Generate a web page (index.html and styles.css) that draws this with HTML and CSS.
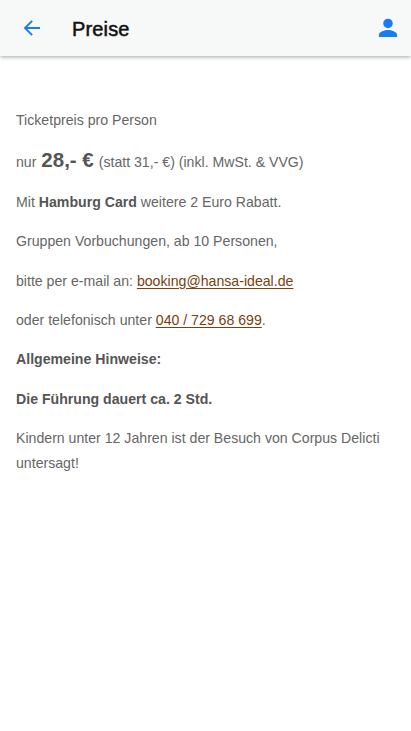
FILE: index.html
```html
<!DOCTYPE html>
<html lang="de">
<head>
  <meta charset="UTF-8" />
  <meta name="viewport" content="width=device-width, initial-scale=1">
  <title>Preise</title>
  <link rel="stylesheet" href="styles.css">
</head>
<body>
  <header class="toolbar">
    <a href="#" class="icon-btn" aria-label="Zurück">
      <svg width="24" height="24" viewBox="0 0 24 24"><path d="M20 12H5.2M12.2 4.8 5 12l7.2 7.2" fill="none" stroke="currentColor" stroke-width="1.9"/></svg>
    </a>
    <h1 class="title">Preise</h1>
    <a href="#" class="icon-btn" aria-label="Profil">
      <svg width="26" height="26" viewBox="0 0 24 24"><path d="M12 12.2a4.4 4.4 0 1 0 0-8.8 4.4 4.4 0 0 0 0 8.8zM3.6 20.2v-1.8c0-3 5.6-4.5 8.4-4.5s8.4 1.5 8.4 4.5v1.8z" fill="currentColor"/></svg>
    </a>
  </header>

  <main class="content">
    <p>Ticketpreis pro Person</p>
    <p class="price-line">nur <strong class="price">28,- €</strong> (statt 31,- €) (inkl. MwSt. &amp; VVG)</p>
    <p>Mit <strong>Hamburg Card</strong> weitere 2 Euro Rabatt.</p>
    <p>Gruppen Vorbuchungen, ab 10 Personen,</p>
    <p>bitte per e-mail an: <a href="mailto:booking@hansa-ideal.de">booking@hansa-ideal.de</a></p>
    <p>oder telefonisch unter <a href="tel:04072968699">040 / 729 68 699</a>.</p>
    <p><strong>Allgemeine Hinweise:</strong></p>
    <p><strong>Die Führung dauert ca. 2 Std.</strong></p>
    <p>Kindern unter 12 Jahren ist der Besuch von Corpus Delicti untersagt!</p>
  </main>
</body>
</html>
```
FILE: styles.css
```css
body {
  margin: 0;
  min-height: 100vh;
  background: #fff;
  color: #666;
  font-family: "Liberation Sans", Arial, sans-serif;
}

/* Toolbar */
.toolbar {
  display: flex;
  align-items: center;
  box-sizing: border-box;
  height: 56px;
  padding: 0 10px 0 20px;
  background: #f7f9f9;
  box-shadow: 0 1px 4px rgba(0,0,0,0.35);
}
.icon-btn {
  display: flex;
  color: #1a7bf2;
}
.title {
  flex: 1;
  margin: 2px 0 0 28px;
  color: #111;
  font-size: 20px;
  font-weight: normal;
  letter-spacing: 0.15px;
  -webkit-text-stroke: 0.5px #111;
}

/* Text */
.content {
  padding: 52px 16px 0;
  font-size: 14.13px;
  line-height: 25px;
}
.content p {
  margin: 0 0 14.4px;
}
.content strong {
  color: #555;
}
.content a {
  color: #7a400f;
  text-underline-offset: 2px;
}
.content .price-line {
  line-height: 26px;
}
.content .price {
  margin: 0 1px;
  font-size: 20.5px;
}
```
